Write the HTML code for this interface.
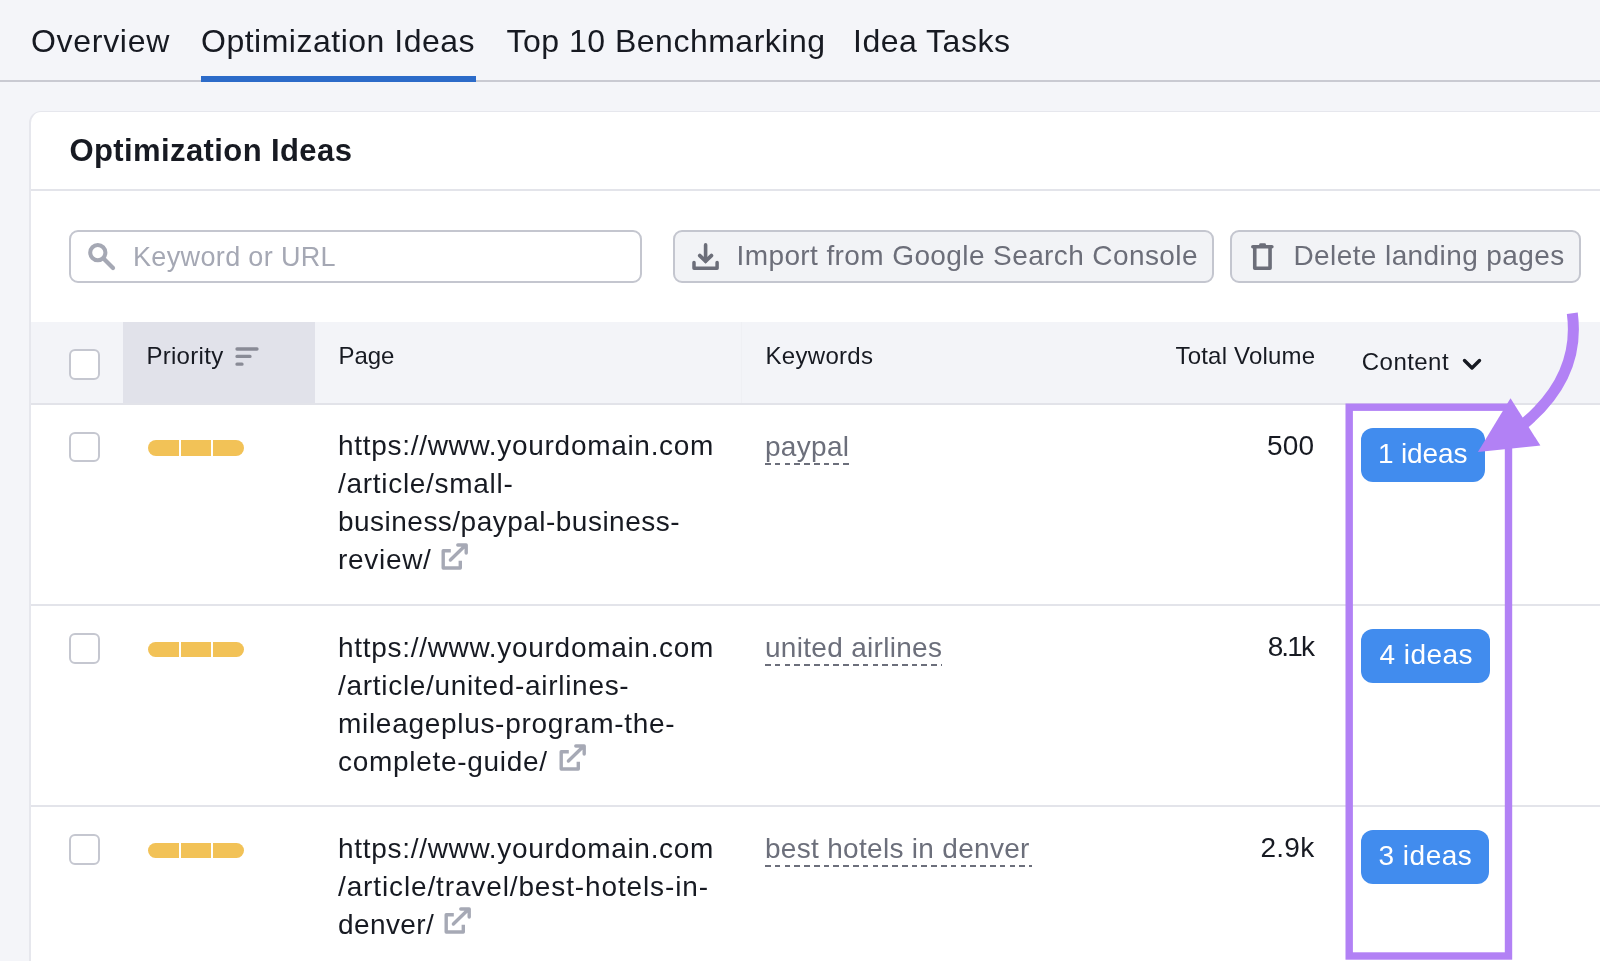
<!DOCTYPE html>
<html>
<head>
<meta charset="utf-8">
<style>
html,body{margin:0;padding:0;}
body{width:1600px;height:961px;overflow:hidden;position:relative;background:#f4f5f9;font-family:"Liberation Sans",sans-serif;color:#171a22;}
.a{position:absolute;white-space:pre;line-height:1;}
.tab{font-size:32px;letter-spacing:0.5px;top:25.3px;color:#171a22;}
.card{position:absolute;left:29px;top:111px;width:1600px;height:900px;background:#fff;border:2px solid #e6e7ed;border-top-width:1.5px;border-radius:12px;box-sizing:border-box;}
.hline{position:absolute;height:2px;background:#e3e4ea;}
.btn{position:absolute;top:230px;height:53px;box-sizing:border-box;border:2px solid #c4c6cf;border-radius:9px;background:#f2f3f6;}
.btxt{font-size:28px;letter-spacing:0.4px;color:#6c6e79;top:242.3px;}
.th{font-size:24px;letter-spacing:0.3px;top:344.1px;color:#171a22;}
.cb{position:absolute;left:69px;width:30.5px;height:30.5px;box-sizing:border-box;border:2px solid #c5c7d0;border-radius:6px;background:#fff;}
.bars{position:absolute;left:148px;width:96px;height:15.5px;}
.bars i{position:absolute;top:0;height:15.5px;background:#f2c257;}
.url{font-size:28px;letter-spacing:0.7px;line-height:38px;color:#171a22;left:338px;}
.kw{font-size:28px;letter-spacing:0.3px;color:#6c6f7b;left:765px;}
.dash{position:absolute;left:765.3px;height:2px;background-image:repeating-linear-gradient(90deg,#6c6f7b 0 5.6px,transparent 5.6px 9.78px);}
.vol{font-size:28px;letter-spacing:0.3px;color:#171a22;}
.pill{position:absolute;left:1361.3px;height:54px;background:#418cee;border-radius:12px;}
.ptxt{font-size:28px;color:#fff;letter-spacing:-0.15px;margin-top:0.6px;}
</style>
</head>
<body><div id="wrap" style="position:absolute;left:0;top:0;width:1600px;height:961px;will-change:transform;">
<!-- tabs -->
<div class="a tab" style="left:31px;letter-spacing:0.7px;">Overview</div>
<div class="a tab" style="left:201px;">Optimization Ideas</div>
<div class="a tab" style="left:506.5px;">Top 10 Benchmarking</div>
<div class="a tab" style="left:853px;">Idea Tasks</div>
<div style="position:absolute;left:0;top:80px;width:1600px;height:2px;background:#c9cad2;"></div>
<div style="position:absolute;left:201px;top:76px;width:274.5px;height:5.5px;background:#2c6bc9;"></div>

<!-- card -->
<div class="card"></div>
<div class="a" style="left:69.5px;top:135.4px;font-size:31px;font-weight:700;letter-spacing:0.4px;color:#171a22;">Optimization Ideas</div>
<div class="hline" style="left:31px;top:189px;width:1569px;"></div>

<!-- search -->
<div style="position:absolute;left:69px;top:230px;width:573px;height:53px;box-sizing:border-box;border:2px solid #c4c6cf;border-radius:9px;background:#fff;"></div>
<svg style="position:absolute;left:85px;top:240px;" width="34" height="34" viewBox="0 0 34 34">
  <circle cx="12.8" cy="12.6" r="7.6" fill="none" stroke="#a5a8b4" stroke-width="4"/>
  <line x1="18.5" y1="18.5" x2="28" y2="28" stroke="#a5a8b4" stroke-width="4.2" stroke-linecap="round"/>
</svg>
<div class="a" style="left:133px;top:244.4px;font-size:27px;letter-spacing:0.35px;color:#a5a8b4;">Keyword or URL</div>

<!-- import button -->
<div class="btn" style="left:673px;width:541px;"></div>
<svg style="position:absolute;left:688px;top:240px;" width="34" height="34" viewBox="0 0 34 34">
  <path d="M17.6 4.9 V21" stroke="#6c6e79" stroke-width="3.6" stroke-linecap="round" fill="none"/>
  <path d="M11.8 15.6 L17.6 21.2 L23.4 15.6" stroke="#6c6e79" stroke-width="3.8" stroke-linecap="round" stroke-linejoin="miter" fill="none"/>
  <path d="M6 22.4 V28.2 H29.1 V22.4" stroke="#6c6e79" stroke-width="3.5" stroke-linecap="round" stroke-linejoin="round" fill="none"/>
</svg>
<div class="a btxt" style="left:736.5px;">Import from Google Search Console</div>

<!-- delete button -->
<div class="btn" style="left:1230px;width:350.5px;"></div>
<svg style="position:absolute;left:1246px;top:240px;" width="34" height="34" viewBox="0 0 34 34">
  <path d="M8.75 7 V28.25 H24.05 V7" stroke="#6c6e79" stroke-width="3.6" stroke-linejoin="round" fill="none"/>
  <path d="M6.8 6.85 H25.9" stroke="#6c6e79" stroke-width="3.5" stroke-linecap="round" fill="none"/>
  <path d="M14.6 4.6 H18.6" stroke="#6c6e79" stroke-width="2.8" stroke-linecap="round" fill="none"/>
</svg>
<div class="a btxt" style="left:1293.5px;top:242.2px;">Delete landing pages</div>

<!-- table header -->
<div style="position:absolute;left:31px;top:322px;width:1569px;height:81px;background:#f3f4f8;"></div>
<div style="position:absolute;left:123px;top:322px;width:192px;height:81px;background:#e1e2ea;"></div>
<div class="hline" style="left:31px;top:403px;width:1569px;background:#e2e3e9;"></div>
<div style="position:absolute;left:741px;top:322px;width:1px;height:81px;background:#eff0f4;"></div>
<div class="cb" style="top:349.4px;"></div>
<div class="a th" style="left:146.4px;">Priority</div>
<svg style="position:absolute;left:232px;top:344px;" width="30" height="24" viewBox="0 0 30 24">
  <path d="M5 5 H25 M5 12.4 H18 M5 20.2 H10" stroke="#898b96" stroke-width="3.3" stroke-linecap="round" fill="none"/>
</svg>
<div class="a th" style="left:338.4px;letter-spacing:0px;">Page</div>
<div class="a th" style="left:765.5px;">Keywords</div>
<div class="a th" style="left:1175.5px;letter-spacing:0.2px;">Total Volume</div>
<div class="a th" style="left:1361.8px;top:349.5px;letter-spacing:0.45px;">Content</div>
<svg style="position:absolute;left:1458.3px;top:352.8px;" width="28" height="22" viewBox="0 0 28 22">
  <path d="M6.5 7.5 L14 15 L21.5 7.5" stroke="#171a22" stroke-width="3.4" stroke-linecap="round" stroke-linejoin="round" fill="none"/>
</svg>

<!-- row dividers -->
<div class="hline" style="left:31px;top:604px;width:1569px;"></div>
<div class="hline" style="left:31px;top:805.2px;width:1569px;"></div>

<!-- row 1 -->
<div class="cb" style="top:431.8px;"></div>
<div class="bars" style="top:440.3px;"><i style="left:0;width:30.5px;border-radius:8px 0 0 8px;"></i><i style="left:32.7px;width:30.5px;"></i><i style="left:65.4px;width:30.6px;border-radius:0 8px 8px 0;"></i></div>
<div class="a url" style="top:427.3px;">https://www.yourdomain.com
/article/small-
<span style="letter-spacing:0.48px">business/paypal-business-</span>
review/</div>
<svg style="position:absolute;left:435px;top:535px;" width="40" height="40" viewBox="0 0 40 40">
  <path d="M15.8 15.8 H8.2 V33 H25.3 V25.8" stroke="#a6a9b5" stroke-width="3.4" stroke-linejoin="round" stroke-linecap="butt" fill="none"/>
  <path d="M15.4 25 L30 10.8 M22.8 10 H31.2 V18" stroke="#a6a9b5" stroke-width="3.4" stroke-linecap="round" stroke-linejoin="round" fill="none"/>
</svg>
<div class="a kw" style="top:432.5px;">paypal</div>
<div class="dash" style="top:462.5px;width:84px;"></div>
<div class="a vol" style="right:285.5px;top:431.5px;">500</div>
<div class="pill" style="top:428px;width:123.3px;"></div>
<div class="a ptxt" style="left:1378px;top:439.2px;">1 ideas</div>

<!-- row 2 -->
<div class="cb" style="top:633px;"></div>
<div class="bars" style="top:641.5px;"><i style="left:0;width:30.5px;border-radius:8px 0 0 8px;"></i><i style="left:32.7px;width:30.5px;"></i><i style="left:65.4px;width:30.6px;border-radius:0 8px 8px 0;"></i></div>
<div class="a url" style="top:628.5px;">https://www.yourdomain.com
/article/united-airlines-
mileageplus-program-the-
complete-guide/</div>
<svg style="position:absolute;left:553px;top:736.2px;" width="40" height="40" viewBox="0 0 40 40">
  <path d="M15.8 15.8 H8.2 V33 H25.3 V25.8" stroke="#a6a9b5" stroke-width="3.4" stroke-linejoin="round" stroke-linecap="butt" fill="none"/>
  <path d="M15.4 25 L30 10.8 M22.8 10 H31.2 V18" stroke="#a6a9b5" stroke-width="3.4" stroke-linecap="round" stroke-linejoin="round" fill="none"/>
</svg>
<div class="a kw" style="top:633.7px;">united airlines</div>
<div class="dash" style="top:663.7px;width:177px;"></div>
<div class="a vol" style="right:287px;top:632.7px;letter-spacing:-1.9px;">8.1k</div>
<div class="pill" style="top:629px;width:128.5px;"></div>
<div class="a ptxt" style="left:1379.5px;top:640.4px;letter-spacing:0.45px;">4 ideas</div>

<!-- row 3 -->
<div class="cb" style="top:834.2px;"></div>
<div class="bars" style="top:842.7px;"><i style="left:0;width:30.5px;border-radius:8px 0 0 8px;"></i><i style="left:32.7px;width:30.5px;"></i><i style="left:65.4px;width:30.6px;border-radius:0 8px 8px 0;"></i></div>
<div class="a url" style="top:829.7px;">https://www.yourdomain.com
<span style="letter-spacing:0.87px">/article/travel/best-hotels-in-</span>
<span style="letter-spacing:0.39px">denver/</span></div>
<svg style="position:absolute;left:437.75px;top:898.8px;" width="40" height="40" viewBox="0 0 40 40">
  <path d="M15.8 15.8 H8.2 V33 H25.3 V25.8" stroke="#a6a9b5" stroke-width="3.4" stroke-linejoin="round" stroke-linecap="butt" fill="none"/>
  <path d="M15.4 25 L30 10.8 M22.8 10 H31.2 V18" stroke="#a6a9b5" stroke-width="3.4" stroke-linecap="round" stroke-linejoin="round" fill="none"/>
</svg>
<div class="a kw" style="top:834.9px;">best hotels in denver</div>
<div class="dash" style="top:864.9px;width:267px;"></div>
<div class="a vol" style="right:285.5px;top:833.9px;">2.9k</div>
<div class="pill" style="top:830px;width:127.8px;"></div>
<div class="a ptxt" style="left:1378.5px;top:841.6px;letter-spacing:0.5px;">3 ideas</div>

<!-- annotation -->
<svg style="position:absolute;left:0;top:0;" width="1600" height="961" viewBox="0 0 1600 961">
  <rect x="1349.2" y="407.2" width="159.3" height="548.8" fill="none" stroke="#b281f5" stroke-width="7.4"/>
  <path d="M1572.3 313.3 C1576 341 1573 382 1525.5 422.5 L1512 432" fill="none" stroke="#b281f5" stroke-width="11"/>
  <path d="M1510.5 398.3 L1540.4 445.6 L1477.9 452 Z" fill="#b281f5"/>
</svg>
</div></body>
</html>
